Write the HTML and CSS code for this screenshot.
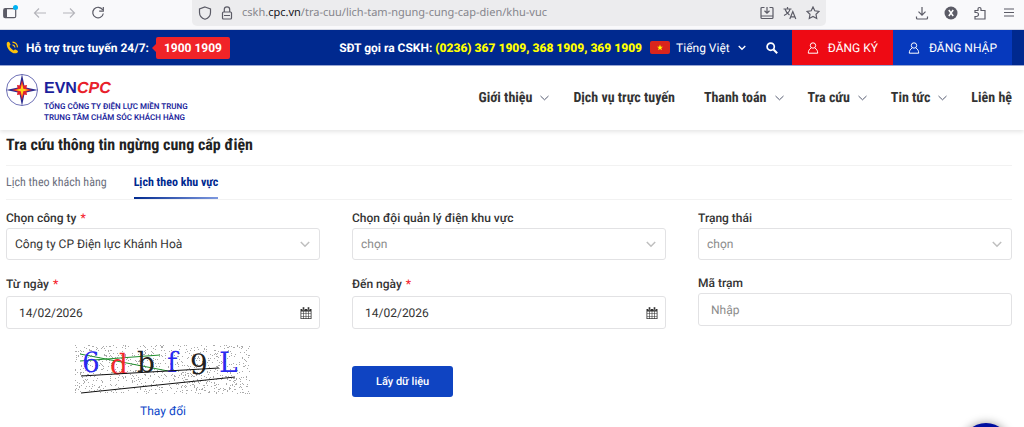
FILE: index.html
```html
<!DOCTYPE html>
<html lang="vi">
<head>
	<meta charset="UTF-8">
	<meta name="viewport" content="width=device-width, initial-scale=1">
	<title>Tra cứu thông tin ngừng cung cấp điện</title>
	<link rel="stylesheet" href="styles.css">
</head>
<body>
	<div class="browser">
		<div class="browserNav">
			<button type="button" aria-label="Sidebar"><svg width="18" height="18" viewBox="0 0 18 18"><rect x="3.700" y="4.700" width="12" height="9" rx="1.500"/><path d="M4 5h3v9H4z" fill="#5b5b66" stroke="none"/><circle cx="15.500" cy="3.500" r="2.500" fill="#00b3f4" stroke="none"/></svg></button>
			<button type="button" aria-label="Back"><svg width="14" height="14" viewBox="0 0 14 14" class="dim"><path d="M13 7H2M6 2.500L1.500 7 6 11.500"/></svg></button>
			<button type="button" aria-label="Forward"><svg width="14" height="14" viewBox="0 0 14 14" class="dim"><path d="M1 7h11M8 2.500L12.500 7 8 11.500"/></svg></button>
			<button type="button" aria-label="Reload"><svg width="14" height="14" viewBox="0 0 14 14"><path d="M11.600 3.800A5.300 5.300 0 1 0 12.300 7.500M12.300 1v4.200H8.200"/></svg></button>
		</div>
		<div class="urlBar">
			<svg width="14" height="14" viewBox="0 0 14 14"><path d="M7 1L12.500 3v3.500C12.500 10 10 12.300 7 13.300 4 12.300 1.500 10 1.500 6.500V3z"/></svg>
			<svg width="14" height="14" viewBox="0 0 14 14"><rect x="2.500" y="6" width="9" height="7" rx="1"/><path d="M4.300 6V3.500a2.700 2.700 0 0 1 5.400 0V6M4 9.500h6"/></svg>
			<div class="url">cskh.<b>cpc.vn</b>/tra-cuu/lich-tam-ngung-cung-cap-dien/khu-vuc</div>
			<div class="urlIcons">
				<svg width="14" height="14" viewBox="0 0 14 14"><path d="M4.500 1.500H2a1 1 0 0 0-1 1v9a1 1 0 0 0 1 1h10a1 1 0 0 0 1-1v-9a1 1 0 0 0-1-1H9.500M1 10h12M7 1v6M4.500 4.800L7 7.200l2.500-2.400"/></svg>
				<svg width="14" height="14" viewBox="0 0 14 14"><path d="M.5 3h8M4.500 1v2M7 3C6.500 6 4 8 1 9.500M2.200 3.500C3 6 4.500 7.800 6.500 9M6.800 13l3-7.500 3 7.500M7.900 10.800h3.800"/></svg>
				<svg width="14" height="14" viewBox="0 0 14 14"><path d="M7 1l1.800 3.800 4.200.6-3 2.900.7 4.200L7 10.500l-3.700 2 .7-4.200-3-2.900 4.200-.6z"/></svg>
			</div>
		</div>
		<div class="browserTools">
			<svg width="14" height="14" viewBox="0 0 14 14"><path d="M7 1v8M3.500 5.700L7 9.200l3.500-3.500M1.500 10.500V12a1 1 0 0 0 1 1h9a1 1 0 0 0 1-1v-1.500"/></svg>
			<svg width="14" height="14" viewBox="0 0 14 14"><circle cx="7" cy="7" r="6.500" fill="#5b5b66" stroke="none"/><path d="M4.800 4l4.400 6M9.200 4L4.800 10" stroke="#fff" stroke-width="1.500"/></svg>
			<svg width="14" height="14" viewBox="0 0 14 14"><path d="M2 6.500V4.500h3V3a1.500 1.500 0 0 1 3 0v1.500h4V13H2v-2.500h1.500a1.500 1.500 0 0 0 0-4H1.500"/></svg>
			<svg width="14" height="14" viewBox="0 0 14 14"><path d="M2 3h10M2 6.500h10M2 10h10"/></svg>
		</div>
	</div>

	<div class="topBar">
		<div class="hotline">
			<svg width="13" height="13" viewBox="0 0 13 13"><path d="M1 1.500C2 .3 3 .6 3.500 1.500l.9 1.800c.3.700-.5 1.200-.9 1.700.8 2 2.200 3.500 4.200 4.400.6-.5 1.100-1.200 1.800-.9l1.800 1c.9.5.9 1.400-.1 2.300C6.500 14.500-.8 6.800 1 1.500z" fill="#fdc10b"/><path d="M6.500 3.800c1.500.2 2.300 1.200 2.500 2.700M6.500 1.200c3 .3 4.800 2.200 5 5.200" fill="none" stroke="#fdc10b" stroke-width="1.200"/></svg>
			<span>Hỗ trợ trực tuyến 24/7:</span>
			<a href="tel:19001909" class="hotNum">1900 1909</a>
		</div>
		<div class="topRight">
			<p class="callOut">SĐT gọi ra CSKH: <b>(0236) 367 1909, 368 1909, 369 1909</b></p>
			<button type="button" class="lang">
				<svg width="20" height="13" viewBox="0 0 20 13"><rect width="20" height="13" rx="2" fill="#da251d"/><path d="M10 3.500l.8 2.200H13l-1.800 1.400.7 2.200L10 8l-1.900 1.300.7-2.200L7 5.700h2.200z" fill="#ff0"/></svg>
				<span>Tiếng Việt</span>
				<svg width="8" height="6" viewBox="0 0 8 6"><path d="M.7 1L4 4.300 7.300 1" fill="none" stroke="#fff" stroke-width="1.300"/></svg>
			</button>
			<button type="button" class="search" aria-label="Tìm kiếm"><svg width="12" height="12" viewBox="0 0 12 12"><circle cx="4.700" cy="4.700" r="3.600" fill="none" stroke="#fff" stroke-width="1.700"/><path d="M7.500 7.500l3.700 3.700" stroke="#fff" stroke-width="2"/></svg></button>
			<a href="#" class="account signUp"><svg width="12" height="12" viewBox="0 0 12 12"><circle cx="6" cy="3.500" r="2.700"/><path d="M4 6C2 7.500 1.300 9 1.300 11.200h9.400C10.700 9 10 7.500 8 6"/></svg>ĐĂNG KÝ</a>
			<a href="#" class="account signIn"><svg width="12" height="12" viewBox="0 0 12 12"><circle cx="6" cy="3.500" r="2.700"/><path d="M4 6C2 7.500 1.300 9 1.300 11.200h9.400C10.700 9 10 7.500 8 6"/></svg>ĐĂNG NHẬP</a>
		</div>
	</div>

	<div class="header">
		<a href="#" class="logo">
			<svg width="34" height="34" viewBox="0 0 34 34"><circle cx="17" cy="17" r="15.500" fill="#fff" stroke="#4a4da3" stroke-width=".8"/><path d="M17 1l2.700 13.300L33 17l-13.300 2.700L17 33l-2.700-13.300L1 17l13.300-2.700z" fill="#2a2b8f"/><path d="M17 7l1.600 5.600 3.400-.6-.6 3.400L27 17l-5.600 1.600.6 3.400-3.400-.6L17 27l-1.600-5.600-3.400.6.6-3.400L7 17l5.600-1.600-.6-3.400 3.400.6z" fill="#e3202b"/><path d="M17 10l1.300 5.700L24 17l-5.700 1.300L17 24l-1.300-5.700L10 17l5.700-1.300z" fill="#ffd21a"/></svg>
			<span class="logoText">
				<strong>EVN<em>CPC</em></strong>
				<span>TỔNG CÔNG TY ĐIỆN LỰC MIỀN TRUNG</span>
				<span>TRUNG TÂM CHĂM SÓC KHÁCH HÀNG</span>
			</span>
		</a>
		<ul class="menu">
			<li><a href="#">Giới thiệu</a><svg width="9" height="6" viewBox="0 0 9 6"><path d="M.5 1l4 3.800 4-3.800"/></svg></li>
			<li><a href="#">Dịch vụ trực tuyến</a></li>
			<li><a href="#">Thanh toán</a><svg width="9" height="6" viewBox="0 0 9 6"><path d="M.5 1l4 3.800 4-3.800"/></svg></li>
			<li><a href="#">Tra cứu</a><svg width="9" height="6" viewBox="0 0 9 6"><path d="M.5 1l4 3.800 4-3.800"/></svg></li>
			<li><a href="#">Tin tức</a><svg width="9" height="6" viewBox="0 0 9 6"><path d="M.5 1l4 3.800 4-3.800"/></svg></li>
			<li><a href="#">Liên hệ</a></li>
		</ul>
	</div>

	<div class="main">
		<h1>Tra cứu thông tin ngừng cung cấp điện</h1>
		<ul class="tabs">
			<li><a href="#">Lịch theo khách hàng</a></li>
			<li class="cur"><a href="#">Lịch theo khu vực</a></li>
		</ul>
		<form class="lookup">
			<div class="field">
				<label for="company">Chọn công ty <i>*</i></label>
				<div class="control">
					<select id="company"><option>Công ty CP Điện lực Khánh Hoà</option></select>
					<svg class="arrow" width="10" height="7" viewBox="0 0 10 7"><path d="M.8 1L5 5.300 9.200 1"/></svg>
				</div>
			</div>
			<div class="field">
				<label for="team">Chọn đội quản lý điện khu vực</label>
				<div class="control">
					<select id="team" class="empty"><option>chọn</option></select>
					<svg class="arrow" width="10" height="7" viewBox="0 0 10 7"><path d="M.8 1L5 5.300 9.200 1"/></svg>
				</div>
			</div>
			<div class="field">
				<label for="state">Trạng thái</label>
				<div class="control">
					<select id="state" class="empty"><option>chọn</option></select>
					<svg class="arrow" width="10" height="7" viewBox="0 0 10 7"><path d="M.8 1L5 5.300 9.200 1"/></svg>
				</div>
			</div>
			<div class="field date">
				<label for="from">Từ ngày <i>*</i></label>
				<div class="control">
					<input type="text" id="from" value="14/02/2026">
					<svg class="cal" width="12" height="12" viewBox="0 0 12 12"><path d="M.5 2h11v10H.5z" fill="#333"/><path d="M2.500 0h2v3h-2zM7.500 0h2v3h-2z" fill="#333" stroke="#fff" stroke-width=".4"/><path d="M1.300 4.500h1.900v1.900H1.300zM3.800 4.500h1.900v1.900H3.800zM6.300 4.500h1.900v1.900H6.300zM8.800 4.500h1.900v1.900H8.800zM1.300 7h1.900v1.900H1.300zM3.800 7h1.900v1.900H3.800zM6.300 7h1.900v1.900H6.300zM8.800 7h1.900v1.900H8.800zM1.300 9.500h1.900v1.700H1.300zM3.800 9.500h1.900v1.700H3.800zM6.300 9.500h1.900v1.700H6.300zM8.800 9.500h1.900v1.700H8.800z" fill="#fff"/></svg>
				</div>
			</div>
			<div class="field date">
				<label for="to">Đến ngày <i>*</i></label>
				<div class="control">
					<input type="text" id="to" value="14/02/2026">
					<svg class="cal" width="12" height="12" viewBox="0 0 12 12"><path d="M.5 2h11v10H.5z" fill="#333"/><path d="M2.500 0h2v3h-2zM7.500 0h2v3h-2z" fill="#333" stroke="#fff" stroke-width=".4"/><path d="M1.300 4.500h1.900v1.900H1.300zM3.800 4.500h1.900v1.900H3.800zM6.300 4.500h1.900v1.900H6.300zM8.800 4.500h1.900v1.900H8.800zM1.300 7h1.900v1.900H1.300zM3.800 7h1.900v1.900H3.800zM6.300 7h1.900v1.900H6.300zM8.800 7h1.900v1.900H8.800zM1.300 9.500h1.900v1.700H1.300zM3.800 9.500h1.900v1.700H3.800zM6.300 9.500h1.900v1.700H6.300zM8.800 9.500h1.900v1.700H8.800z" fill="#fff"/></svg>
				</div>
			</div>
			<div class="field">
				<label for="station">Mã trạm</label>
				<div class="control">
					<input type="text" id="station" placeholder="Nhập">
				</div>
			</div>
			<div class="captcha">
				<svg width="176" height="50" viewBox="0 0 176 50">
					<path id="noise" stroke="#aaa" stroke-width="1"/>
					<path d="M5 9l88 17M5 16l80-6" stroke="#1f8f2c" stroke-width="1"/>
					<g class="code">
						<text x="7" y="27" fill="#2a2af0">6</text>
						<text x="35" y="29" fill="#f02a2a">d</text>
						<text x="62" y="27" fill="#222">b</text>
						<text x="92" y="27" fill="#2a2af0">f</text>
						<text x="115" y="29" fill="#222">9</text>
						<text x="144" y="27" fill="#2a2af0">L</text>
					</g>
					<path d="M6 31l138-8M6 48l154-16" stroke="#111" stroke-width="1"/>
				</svg>
				<a href="#">Thay đổi</a>
			</div>
			<div class="submit">
				<button type="submit">Lấy dữ liệu</button>
			</div>
		</form>
	</div>
	<button type="button" class="chat" aria-label="Chat"></button>

	<script>
		//captcha noise, fixed seed
		var seed = 7;
		function rnd(n){
			seed = (seed * 16807) % 2147483647;
			return Math.floor(seed / 2147483647 * n);
		}
		var d = "";
		for (var i = 0; i < 900; i++) {
			d += "M" + rnd(175) + " " + (rnd(49) + 0.5) + "h1";
		}
		document.getElementById("noise").setAttribute("d", d);
	</script>
</body>
</html>
```
FILE: styles.css
```css
*{
	margin: 0;
	padding: 0;
	box-sizing: border-box;
}
body{
	font-family: Roboto, "Liberation Sans", sans-serif;
	font-size: 12px;
	line-height: 16px;
	color: #333;
	background-color: #fff;
	overflow: hidden;
	text-rendering: geometricPrecision;
}
ul{
	list-style: none;
}
a{
	text-decoration: none;
	color: inherit;
}
button{
	border: none;
	background: none;
	font: inherit;
	color: inherit;
	text-rendering: inherit;
	cursor: pointer;
}
svg{
	display: block;
	flex: none;
}
/* browser */
.browser{
	display: flex;
	align-items: flex-start;
	height: 30px;
	background-color: #f9f9fb;
	border-bottom: 1px solid #d5d8e2;
}
.browser svg{
	fill: none;
	stroke: #5b5b66;
	stroke-width: 1.2;
}
.browser svg.dim{
	stroke: #b5b5bb;
}
.browserNav{
	display: flex;
	align-items: center;
	gap: 15px;
	width: 192px;
	height: 26px;
	flex: none;
}
.urlBar{
	flex: 1;
	display: flex;
	align-items: center;
	gap: 8px;
	height: 26px;
	padding: 0 6px;
	border-radius: 0 0 5px 5px;
	background-color: #ececee;
}
.url{
	flex: 1;
	font-family: "Noto Sans", sans-serif;
	font-size: 11px;
	color: #85858c;
	white-space: nowrap;
}
.url b{
	font-weight: normal;
	color: #15141a;
}
.urlIcons{
	display: flex;
	gap: 9px;
}
.browserTools{
	display: flex;
	align-items: center;
	justify-content: flex-end;
	gap: 15px;
	width: 198px;
	height: 26px;
	padding-right: 8px;
}
/* top bar */
.topBar{
	display: flex;
	justify-content: space-between;
	height: 36px;
	padding-right: 12px;
	color: #fff;
	background-color: #00298f;
	border-bottom: 1px solid #9aa8d6;
	white-space: nowrap;
}
.hotline{
	display: flex;
	align-items: center;
	gap: 7px;
	padding-left: 6px;
	font-weight: 700;
}
.hotNum{
	position: relative;
	padding: 3px 8px;
	border-radius: 2px;
	background-color: #f02428;
}
.hotNum:before{
	content: "";
	position: absolute;
	left: -4px;
	top: 7px;
	border: 4px solid transparent;
	border-left: none;
	border-right-color: #f02428;
}
.topRight{
	display: flex;
	align-items: center;
}
.callOut{
	font-weight: 700;
}
.callOut b{
	color: #ff0;
}
.lang{
	display: flex;
	align-items: center;
	gap: 6px;
	padding-left: 8px;
}
.lang svg:last-child{
	margin-left: 2px;
}
.search{
	padding: 0 14px 0 20px;
}
.account{
	display: flex;
	align-items: center;
	gap: 9px;
	height: 35px;
	padding: 0 15px;
}
.account svg{
	fill: none;
	stroke: #fff;
	stroke-width: 1;
}
.signUp{
	background-color: #ee0a14;
}
.signIn{
	background-color: #0639bd;
}
/* header */
.header{
	display: flex;
	justify-content: space-between;
	align-items: center;
	height: 64px;
	padding: 0 12px 0 5px;
	box-shadow: 0 2px 4px rgba(0,0,0,.1);
}
.logo{
	display: flex;
	gap: 5px;
	white-space: nowrap;
	color: #1c1f9c;
}
.logoText{
	padding-top: 8px;
}
.logoText strong{
	display: block;
	padding-bottom: 4px;
	font-family: "Liberation Sans", sans-serif;
	font-size: 16px;
	line-height: 16px;
}
.logoText em{
	color: #e8202a;
}
.logoText span{
	display: block;
	font-size: 8px;
	line-height: 11px;
	font-weight: 600;
}
.menu{
	display: flex;
	gap: 29px;
	font-family: "Roboto Condensed", Roboto, sans-serif;
	font-size: 14px;
	font-weight: 700;
	white-space: nowrap;
}
.menu li{
	display: flex;
	align-items: center;
	gap: 8px;
}
.menu svg{
	margin-right: -5px;
	fill: none;
	stroke: #555b70;
	stroke-width: 1;
}
/* main */
.main{
	padding: 5px 12px 0 6px;
}
h1{
	padding-bottom: 10px;
	border-bottom: 1px solid #f2f2f2;
	font-family: "Roboto Condensed", Roboto, sans-serif;
	font-size: 16px;
	line-height: 20px;
	color: #222;
}
.tabs{
	display: flex;
	gap: 27px;
	border-bottom: 1px solid #f2f2f2;
	font-family: "Roboto Condensed", Roboto, sans-serif;
	font-size: 12px;
	color: #6c6f7d;
}
.tabs li{
	height: 33px;
	padding-top: 8px;
}
.tabs .cur{
	border-bottom: 2px solid;
	border-image: linear-gradient(to right, #00298f, #7f9ae0) 1;
	font-weight: 700;
	color: #00298f;
}
.lookup{
	display: grid;
	grid-template-columns: repeat(3, 1fr);
	column-gap: 32px;
	padding-top: 10px;
}
.field{
	padding-bottom: 15px;
}
.field label{
	display: block;
	padding-bottom: 2px;
	font-weight: 500;
}
.field label i{
	margin-left: 1px;
	font-style: normal;
	color: #f5222d;
}
.date label{
	padding: 1px 0 4px;
}
.control{
	display: grid;
	align-items: center;
}
.control > *{
	grid-area: 1 / 1;
}
.control select, .control input{
	width: 100%;
	height: 33px;
	border: 1px solid #e2e2e4;
	border-radius: 3px;
	background-color: #fff;
	font: inherit;
	color: #333;
	text-rendering: inherit;
	appearance: none;
}
.control select{
	height: 32px;
	padding: 0 8px;
}
.control input{
	padding: 0 12px;
}
.control .empty, .control input::placeholder{
	color: #8c8c8c;
}
.control svg{
	justify-self: end;
	margin-right: 10px;
	pointer-events: none;
}
.control .cal{
	margin-right: 8px;
}
.arrow{
	fill: none;
	stroke: #bfbfbf;
	stroke-width: 1.5;
}
.captcha{
	display: flex;
	flex-direction: column;
	align-items: center;
	gap: 8px;
	padding-top: 1px;
	color: #0d47c9;
}
.code{
	font-family: "DejaVu Serif", serif;
	font-size: 28px;
}
.submit{
	padding-top: 22px;
}
.submit button{
	height: 31px;
	padding: 0 24px;
	border-radius: 3px;
	background-color: #0f44c2;
	font-size: 11px;
	font-weight: 500;
	color: #fff;
}
.chat{
	position: fixed;
	right: 14px;
	bottom: -44px;
	width: 48px;
	height: 48px;
	border-radius: 50%;
	background-color: #000fa0;
	box-shadow: 0 0 10px rgba(0,0,0,.4);
}
```
